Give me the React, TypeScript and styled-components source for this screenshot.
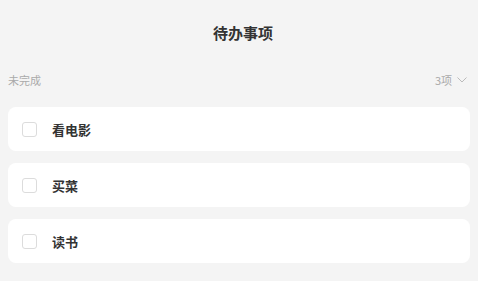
import styled, { createGlobalStyle } from "styled-components";

const GlobalStyle = createGlobalStyle`
  html, body {
    margin: 0;
    padding: 0;
    background: #f4f4f4;
  }
  body {
    font-family: "Noto Sans CJK SC", "Noto Sans", sans-serif;
  }
`;

const Page = styled.div`
  width: 478px;
  height: 281px;
  box-sizing: border-box;
  padding: 0 8px;
  display: flex;
  flex-direction: column;
`;

const Title = styled.h1`
  margin: 0;
  height: 64px;
  padding-left: 8px;
  display: flex;
  align-items: center;
  justify-content: center;
  font-size: 15px;
  font-weight: 700;
  color: #333;
`;

const SectionHeader = styled.div`
  display: flex;
  align-items: center;
  justify-content: space-between;
  height: 32px;
  font-size: 11px;
  color: #aaa;
`;

const Count = styled.div`
  display: flex;
  align-items: center;
  gap: 5px;
  padding-right: 3px;
`;

const List = styled.div`
  display: flex;
  flex-direction: column;
  gap: 12px;
  margin-top: 11px;
`;

const Card = styled.div`
  height: 44px;
  background: #fff;
  border-radius: 8px;
  display: flex;
  align-items: center;
  padding-left: 14px;
  gap: 15px;
`;

const Checkbox = styled.span`
  width: 15px;
  height: 15px;
  box-sizing: border-box;
  border: 1px solid #dcdcdc;
  border-radius: 3px;
  background: #fff;
`;

const Label = styled.span`
  font-size: 13px;
  font-weight: 700;
  color: #333;
`;

const todos = ["看电影", "买菜", "读书"];

export default function App() {
  return (
    <>
      <GlobalStyle />
      <Page>
        <Title>待办事项</Title>
        <SectionHeader>
          <span>未完成</span>
          <Count>
            <span>{todos.length}项</span>
            <svg width="10" height="6" viewBox="0 0 10 6" fill="none">
              <path d="M0.5 0.5 L5 5 L9.5 0.5" stroke="#bbb" strokeWidth="1" />
            </svg>
          </Count>
        </SectionHeader>
        <List>
          {todos.map((t) => (
            <Card key={t}>
              <Checkbox />
              <Label>{t}</Label>
            </Card>
          ))}
        </List>
      </Page>
    </>
  );
}
